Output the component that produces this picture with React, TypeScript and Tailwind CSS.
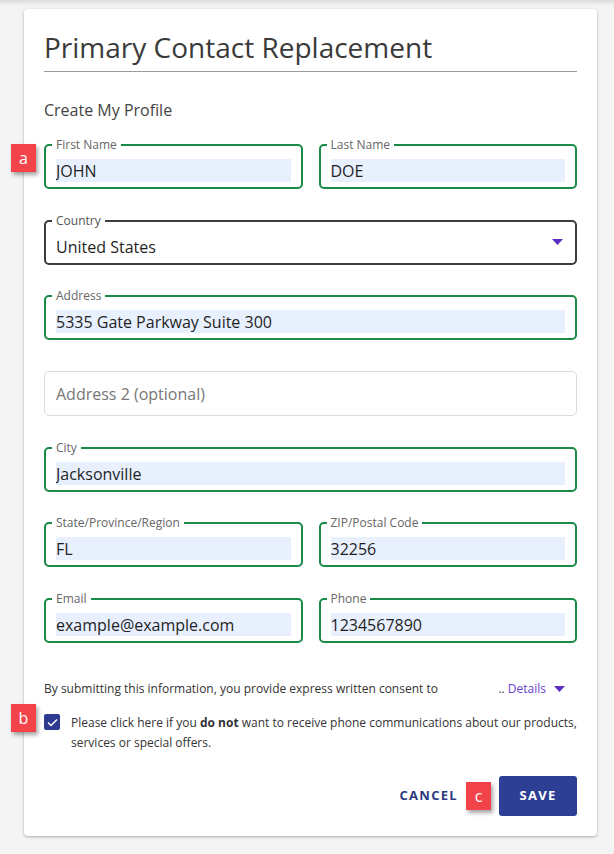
import type { ReactNode } from "react";

const font = { fontFamily: '"Open Sans", "Noto Sans", sans-serif' };

function Badge({ letter, className }: { letter: string; className: string }) {
  return (
    <span
      className={`absolute flex h-[28px] w-[25px] items-center justify-center bg-[#f2434b] text-[16px] leading-none text-white shadow-[2px_3px_4px_rgba(0,0,0,0.35)] ${className}`}
    >
      {letter}
    </span>
  );
}

type FieldProps = {
  label: string;
  value: string;
  className?: string;
};

function Field({ label, value, className = "" }: FieldProps) {
  return (
    <fieldset
      className={`min-w-0 rounded-[5px] border-2 border-[#1a8a47] px-[10px] pb-[5px] pt-[7px] ${className}`}
    >
      <legend className="-ml-[4px] px-[4px] text-[12px] leading-[14px] text-[#666]">
        {label}
      </legend>
      <div className="h-[23px] overflow-hidden bg-[#e8f0fe] text-[16px] leading-[25px] text-[#1f1f1f]">
        {value}
      </div>
    </fieldset>
  );
}

function Row({ children, className = "" }: { children: ReactNode; className?: string }) {
  return <div className={`relative grid grid-cols-2 gap-4 ${className}`}>{children}</div>;
}

export default function App() {
  return (
    <div className="min-h-[854px] bg-[#f4f4f4] pb-[19px]" style={font}>
      <div className="h-[6px] bg-gradient-to-b from-[#dcdcdc] to-[#f4f4f4]" />
      <div className="ml-[24px] mt-[3px] w-[573px] rounded-[4px] bg-white px-[20px] pb-[20px] pt-[19px] shadow-[0_1px_3px_rgba(0,0,0,0.3)]">
        <h1 className="border-b border-[#9a9a9a] pb-[5px] text-[28px] font-normal leading-[38px] text-[#3a3a3a]">
          Primary Contact Replacement
        </h1>
        <p className="mt-[27px] text-[16px] leading-[22px] text-[#444]">Create My Profile</p>

        <div className="mt-[17px] flex flex-col gap-[24.7px]">
          <Row>
            <Badge letter="a" className="-left-[33px] top-[6px]" />
            <Field label="First Name" value="JOHN" />
            <Field label="Last Name" value="DOE" />
          </Row>

          <fieldset className="min-w-0 rounded-[5px] border-2 border-[#3d3d3d] px-[10px] pb-[5px] pt-[7px]">
            <legend className="-ml-[4px] px-[4px] text-[12px] leading-[14px] text-[#555]">
              Country
            </legend>
            <div className="flex h-[23px] items-center justify-between text-[16px] leading-[23px] text-[#1f1f1f]">
              <span className="pt-[2px]">United States</span>
              <svg width="11" height="6" viewBox="0 0 11 6" className="mr-[2px] -mt-[8px]">
                <path d="M0 0h11L5.5 6z" fill="#5a2fbf" />
              </svg>
            </div>
          </fieldset>

          <Field label="Address" value="5335 Gate Parkway Suite 300" />

          <div className="mt-[6px] flex h-[45px] items-center rounded-[5px] border border-[#dcdcdc] px-[11px] text-[16px] text-[#777]">
            Address 2 (optional)
          </div>

          <Field label="City" value="Jacksonville" />

          <Row>
            <Field label="State/Province/Region" value="FL" />
            <Field label="ZIP/Postal Code" value="32256" />
          </Row>

          <Row>
            <Field label="Email" value="example@example.com" />
            <Field label="Phone" value="1234567890" />
          </Row>
        </div>

        <div className="mt-[37px] flex items-center justify-between pr-[12px] text-[12px] leading-[17px] text-[#333]">
          <span>By submitting this information, you provide express written consent to</span>
          <span className="flex items-center gap-[8px]">
            <span>
              <span className="text-[#444]">..</span>{" "}
              <span className="text-[#6a3fd0]">Details</span>
            </span>
            <svg width="11" height="6" viewBox="0 0 11 6">
              <path d="M0 0h11L5.5 6z" fill="#5a2fbf" />
            </svg>
          </span>
        </div>

        <div className="relative mt-[16px] flex items-start gap-[11px]">
          <Badge letter="b" className="-left-[33px] -top-[9px]" />
          <span className="mt-[1px] flex h-[16px] w-[16px] shrink-0 items-center justify-center rounded-[2px] bg-[#2c3b8f]">
            <svg width="11" height="9" viewBox="0 0 11 9">
              <path d="M1 4.6l3 3L10 1.4" fill="none" stroke="white" strokeWidth="1.4" />
            </svg>
          </span>
          <p className="text-[12px] leading-[20px] text-[#333]">
            Please click here if you <b className="font-bold">do not</b> want to receive phone
            communications about our products, services or special offers.
          </p>
        </div>

        <div className="mt-[23px] flex items-center justify-end gap-[41px]">
          <button className="text-[13px] font-bold tracking-[1.3px] text-[#2c3a7e]">CANCEL</button>
          <div className="relative">
            <Badge letter="c" className="-left-[33px] top-[6px]" />
            <button className="h-[40px] w-[78px] rounded-[3px] bg-[#2c3f94] text-[13px] font-bold tracking-[1.3px] text-white">
              SAVE
            </button>
          </div>
        </div>
      </div>
    </div>
  );
}
